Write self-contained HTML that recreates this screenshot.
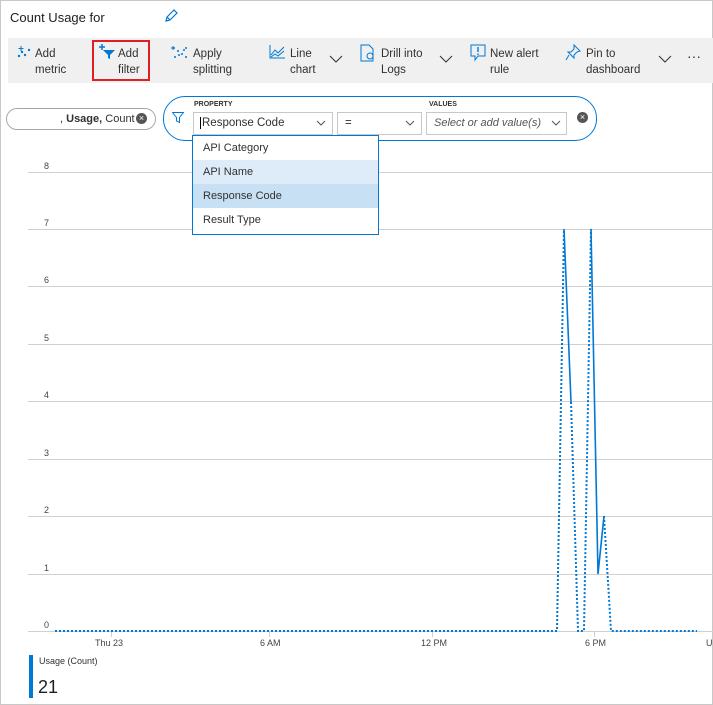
<!DOCTYPE html>
<html><head><meta charset="utf-8"><style>
*{box-sizing:border-box;margin:0;padding:0}
body{width:713px;height:705px;background:#fff;font-family:"Liberation Sans",sans-serif;color:#323130;position:relative;overflow:hidden}
.frame{position:absolute;left:0;top:0;width:713px;height:705px;border:1px solid #c8c8c8}
.abs{position:absolute}
.title{left:10px;top:10px;font-size:13px;color:#201f1f}
.tb{left:8px;top:38px;width:705px;height:45px;background:#f0f0f0}
.btn{position:absolute;top:8px;font-size:11.5px;line-height:16px;color:#323130}
.sel{position:absolute;top:112px;height:23px;border:1px solid #c8c8c8;background:#fff;font-size:11.5px;line-height:20px;padding-left:7px}
.dd{left:192px;top:135px;width:187px;height:100px;border:1px solid #0078d4;background:#fff;font-size:11px}
.dd div{height:24px;line-height:25px;padding-left:10px;color:#323130}
.yl{position:absolute;left:44px;font-size:9px;color:#444}
.xl{position:absolute;top:638px;font-size:9px;color:#444}
</style></head><body>
<div class="frame"></div>
<div class="abs title">Count Usage for</div>
<svg class="abs" style="left:163px;top:8px" width="16" height="16" viewBox="0 0 16 16"><path d="M3 13l1-4 7-7 3 3-7 7z M4 9l3 3" fill="none" stroke="#0078d4" stroke-width="1.2"/></svg>
<div class="abs tb">
 <svg class="abs" style="left:8px;top:7px" width="16" height="14"><g fill="#0078d4"><circle cx="3" cy="11" r="1.2"/><circle cx="6" cy="7" r="1.2"/><circle cx="9" cy="10" r="1.2"/><circle cx="13" cy="5" r="1.2"/></g><path d="M5 1v5M2.5 3.5h5" stroke="#0078d4"/></svg>
 <div class="btn" style="left:27px">Add<br>metric</div>
 <div class="abs" style="left:84px;top:2px;width:58px;height:41px;border:2px solid #e01e26"></div>
 <svg class="abs" style="left:90px;top:6px" width="18" height="16"><path d="M1 3h6M4 0v6" stroke="#0078d4" stroke-width="1.5"/><path d="M5 6h12l-5 5v4l-2-1v-3z" fill="#0078d4"/></svg>
 <div class="btn" style="left:110px">Add<br>filter</div>
 <svg class="abs" style="left:163px;top:7px" width="18" height="16"><g fill="#0078d4"><circle cx="3" cy="3" r="1"/><circle cx="7" cy="6" r="1"/><circle cx="11" cy="9" r="1"/><circle cx="15" cy="12" r="1"/><circle cx="4" cy="12" r="1"/><circle cx="8" cy="10" r="1"/><circle cx="13" cy="5" r="1"/><circle cx="15" cy="3" r="1"/></g><path d="M2 1v4M0 3h4" stroke="#0078d4"/></svg>
 <div class="btn" style="left:185px">Apply<br>splitting</div>
 <svg class="abs" style="left:261px;top:7px" width="16" height="14"><path d="M1 0v13h15" stroke="#0078d4" fill="none"/><path d="M2 10l4-5 3 3 6-6M2 12l4-3 3 2 6-5" stroke="#0078d4" fill="none"/></svg>
 <div class="btn" style="left:282px">Line<br>chart</div>
 <svg class="abs" style="left:321px;top:17px" width="14" height="8"><path d="M1 1l6 6 6-6" stroke="#323130" fill="none"/></svg>
 <svg class="abs" style="left:352px;top:6px" width="16" height="18"><path d="M1 1h8l4 4v12H1z" stroke="#0078d4" fill="none"/><circle cx="10" cy="12" r="3" stroke="#0078d4" fill="none"/></svg>
 <div class="btn" style="left:373px">Drill into<br>Logs</div>
 <svg class="abs" style="left:431px;top:17px" width="14" height="8"><path d="M1 1l6 6 6-6" stroke="#323130" fill="none"/></svg>
 <svg class="abs" style="left:462px;top:6px" width="16" height="18"><path d="M1 1h14v11H8l-3 4v-4H1z" stroke="#0078d4" fill="none"/><path d="M8 3v5M8 9.5v1.5" stroke="#0078d4" stroke-width="1.4"/></svg>
 <div class="btn" style="left:482px">New alert<br>rule</div>
 <svg class="abs" style="left:557px;top:6px" width="16" height="17"><path d="M9 1l6 6-3 1-3 3 0 3-6-6 3 0 3-3z M4 11l-3 5" stroke="#0078d4" fill="none"/></svg>
 <div class="btn" style="left:578px">Pin to<br>dashboard</div>
 <svg class="abs" style="left:650px;top:17px" width="14" height="8"><path d="M1 1l6 6 6-6" stroke="#323130" fill="none"/></svg>
 <div class="btn" style="left:679px;top:10px;font-size:14px">···</div>
</div>
<div class="abs" style="left:6px;top:108px;width:150px;height:22px;border:1px solid #a6a6a6;border-radius:11px;font-size:11px;line-height:20px;padding-left:53px">, <b>Usage,</b> Count</div>
<div class="abs" style="left:136px;top:113px;width:11px;height:11px;border-radius:50%;background:#555;color:#fff;font-size:9px;line-height:11px;text-align:center">×</div>
<div class="abs" style="left:163px;top:96px;width:434px;height:45px;border:1.5px solid #0078d4;border-radius:22px"></div>
<svg class="abs" style="left:172px;top:112px" width="12" height="12"><path d="M0.5 0.5h11l-4 5v5l-3-1.5v-3.5z" stroke="#0078d4" fill="none"/></svg>
<div class="abs" style="left:194px;top:101px;font-size:7px;font-weight:bold;color:#323130">PROPERTY</div>
<div class="abs" style="left:429px;top:101px;font-size:7px;font-weight:bold;color:#323130">VALUES</div>
<div class="sel" style="left:193px;width:140px"><span style="border-left:1.5px solid #000;margin-left:-1px;padding-left:1px">Response Code</span></div>
<div class="sel" style="left:337px;width:85px">=</div>
<div class="sel" style="left:426px;width:141px;font-style:italic;color:#555;font-size:11px">Select or add value(s)</div>
<svg class="abs" style="left:316px;top:120px" width="10" height="6"><path d="M1 1l4 4 4-4" stroke="#555" fill="none"/></svg>
<svg class="abs" style="left:405px;top:120px" width="10" height="6"><path d="M1 1l4 4 4-4" stroke="#555" fill="none"/></svg>
<svg class="abs" style="left:551px;top:120px" width="10" height="6"><path d="M1 1l4 4 4-4" stroke="#555" fill="none"/></svg>
<div class="abs" style="left:577px;top:112px;width:11px;height:11px;border-radius:50%;background:#555;color:#fff;font-size:9px;line-height:11px;text-align:center">×</div>
<svg class="abs" style="left:0;top:0" width="713" height="705">
 <g stroke="#d0d0d0" stroke-width="1">
  <line x1="28" y1="172.5" x2="713" y2="172.5"/><line x1="28" y1="229.5" x2="713" y2="229.5"/><line x1="28" y1="286.5" x2="713" y2="286.5"/><line x1="28" y1="344.5" x2="713" y2="344.5"/><line x1="28" y1="401.5" x2="713" y2="401.5"/><line x1="28" y1="459.5" x2="713" y2="459.5"/><line x1="28" y1="516.5" x2="713" y2="516.5"/><line x1="28" y1="574.5" x2="713" y2="574.5"/><line x1="28" y1="631.5" x2="713" y2="631.5"/>
  <line x1="111.5" y1="632" x2="111.5" y2="637"/><line x1="269.5" y1="632" x2="269.5" y2="637"/><line x1="432.5" y1="632" x2="432.5" y2="637"/><line x1="594.5" y1="632" x2="594.5" y2="637"/>
 </g>
 <g fill="none" stroke="#0078d4" stroke-width="2">
  <path d="M55 631H557L564 229 M571 402L578 631H584L591 229 M604 516L611 631H697" stroke-dasharray="2 2"/>
  <path d="M564 229L571 402 M591 229L598 574L604 516" stroke-width="1.6"/>
 </g>
</svg>
<div class="yl" style="top:161px">8</div><div class="yl" style="top:218px">7</div><div class="yl" style="top:275px">6</div><div class="yl" style="top:333px">5</div><div class="yl" style="top:390px">4</div><div class="yl" style="top:448px">3</div><div class="yl" style="top:505px">2</div><div class="yl" style="top:563px">1</div><div class="yl" style="top:620px">0</div>
<div class="xl" style="left:95px">Thu 23</div><div class="xl" style="left:260px">6 AM</div><div class="xl" style="left:421px">12 PM</div><div class="xl" style="left:585px">6 PM</div><div class="xl" style="left:706px">U</div>
<div class="dd abs"><div>API Category</div><div style="background:#deecf9">API Name</div><div style="background:#c7e0f4">Response Code</div><div>Result Type</div></div>
<div class="abs" style="left:29px;top:655px;width:4px;height:43px;background:#0078d4"></div>
<div class="abs" style="left:39px;top:656px;font-size:9px;color:#323130">Usage (Count)</div>
<div class="abs" style="left:38px;top:677px;font-size:18px;color:#201f1f">21</div>
</body></html>
